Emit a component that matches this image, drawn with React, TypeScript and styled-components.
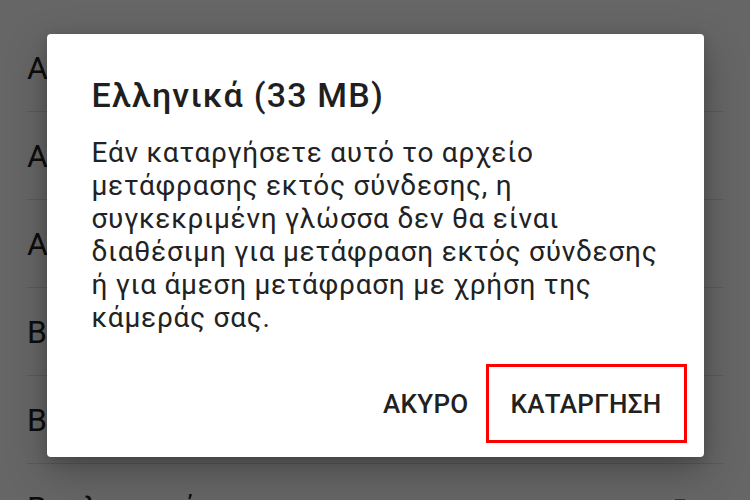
import React from "react";
import styled, { createGlobalStyle } from "styled-components";

const Global = createGlobalStyle`
  html, body { margin: 0; padding: 0; }
  body {
    width: 750px;
    height: 500px;
    overflow: hidden;
    background: #ffffff;
    font-family: Roboto, "Noto Sans", "Liberation Sans", sans-serif;
  }
`;

const Page = styled.div`
  position: relative;
  width: 750px;
  height: 500px;
  overflow: hidden;
  background: #ffffff;
`;

const List = styled.ul`
  list-style: none;
  margin: 0;
  padding: 24px 27px 0;
  display: flex;
  flex-direction: column;
`;

const Row = styled.li`
  height: 86px;
  border-bottom: 1px solid #e2e2e2;
  display: flex;
  align-items: center;
  justify-content: space-between;
  font-size: 32px;
  color: #222222;
  padding-top: 1px;
  white-space: nowrap;
`;

const RowIcon = styled.svg`
  width: 24px;
  height: 40px;
  margin-right: 31px;
  margin-top: 22px;
  flex: none;
`;

const Overlay = styled.div`
  position: absolute;
  inset: 0;
  background: rgba(0, 0, 0, 0.6);
  display: flex;
  justify-content: center;
  align-items: flex-start;
  padding-top: 34px;
  box-sizing: border-box;
`;

const Dialog = styled.div`
  width: 657px;
  height: 423px;
  box-sizing: border-box;
  background: #ffffff;
  border-radius: 4px;
  box-shadow: 0 14px 40px rgba(0, 0, 0, 0.28), 0 4px 12px rgba(0, 0, 0, 0.15);
  padding: 41px 17px 14px 45px;
  display: flex;
  flex-direction: column;
`;

const Title = styled.h2`
  margin: 0;
  font-size: 34px;
  line-height: 40px;
  font-weight: 500;
  letter-spacing: 1.2px;
  color: #1f1f1f;
`;

const Message = styled.p`
  margin: 21px 0 0;
  font-size: 28px;
  line-height: 33px;
  font-weight: 400;
  letter-spacing: 0.75px;
  color: #222222;
  white-space: nowrap;
`;

const Actions = styled.div`
  margin-top: auto;
  display: flex;
  justify-content: flex-end;
  align-items: center;
`;

const ActionButton = styled.button<{ $highlight?: boolean }>`
  font-family: Roboto, "Noto Sans", "Liberation Sans", sans-serif;
  font-size: 26px;
  font-weight: 500;
  letter-spacing: 0.3px;
  color: #212121;
  background: transparent;
  cursor: pointer;
  box-sizing: border-box;
  height: 79px;
  border: 3px solid ${(p) => (p.$highlight ? "#ff0000" : "transparent")};
  padding: 0 ${(p) => (p.$highlight ? "22px" : "14px")};
  margin: 0;
`;

const rows = ["Αγγλικά", "Αλβανικά", "Αραβικά", "Βεγγαλικά", "Βοσνιακά", "Βουλγαρικά"];

const messageLines = [
  "Εάν καταργήσετε αυτό το αρχείο",
  "μετάφρασης εκτός σύνδεσης, η",
  "συγκεκριμένη γλώσσα δεν θα είναι",
  "διαθέσιμη για μετάφραση εκτός σύνδεσης",
  "ή για άμεση μετάφραση με χρήση της",
  "κάμεράς σας.",
];

export default function App() {
  return (
    <>
      <Global />
      <Page>
        <List>
          {rows.map((r, i) => (
            <Row key={r}>
              <span>{r}</span>
              {i === rows.length - 1 && (
                <RowIcon viewBox="0 0 24 40">
                  <rect x="7" y="0" width="10" height="30" fill="#808080" />
                </RowIcon>
              )}
            </Row>
          ))}
        </List>
        <Overlay>
          <Dialog role="dialog">
            <Title>Ελληνικά (33 MB)</Title>
            <Message>
              {messageLines.map((l, i) => (
                <React.Fragment key={i}>
                  {l}
                  {i < messageLines.length - 1 && <br />}
                </React.Fragment>
              ))}
            </Message>
            <Actions>
              <ActionButton>ΑΚΥΡΟ</ActionButton>
              <ActionButton $highlight>ΚΑΤΑΡΓΗΣΗ</ActionButton>
            </Actions>
          </Dialog>
        </Overlay>
      </Page>
    </>
  );
}
